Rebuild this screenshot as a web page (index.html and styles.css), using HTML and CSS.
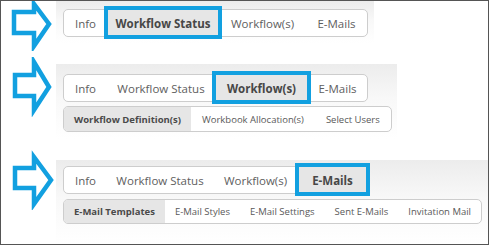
FILE: index.html
```html
<!DOCTYPE html>
<html>
<head>
<meta charset="utf-8">
<link rel="stylesheet" href="styles.css">
</head>
<body>
<div class="frame">
  <div class="row row1">
    <svg class="arrow" width="54" height="50" viewBox="0 0 54 50"><polygon points="13,11 33,11 33,3 48,23 33,45 33,32 13,32"/></svg>
    <div class="shot shot1">
      <div class="tabs">
        <span class="tab t-info">Info</span>
        <span class="tab t-ws active">Workflow Status</span>
        <span class="tab t-wf">Workflow(s)</span>
        <span class="tab t-em">E-Mails</span>
      </div>
    </div>
  </div>
  <div class="row row2">
    <svg class="arrow" width="54" height="60" viewBox="0 0 54 60"><polygon points="14,18 33,18 33,5 48,30 33,53 33,39 14,39"/></svg>
    <div class="shot shot2">
      <div class="tabs">
        <span class="tab t-info">Info</span>
        <span class="tab t-ws">Workflow Status</span>
        <span class="tab t-wf active">Workflow(s)</span>
        <span class="tab t-em">E-Mails</span>
      </div>
      <div class="subtabs">
        <span class="sub sub-active">Workflow Definition(s)</span>
        <span class="sub">Workbook Allocation(s)</span>
        <span class="sub">Select Users</span>
      </div>
    </div>
  </div>
  <div class="row row3">
    <svg class="arrow" width="56" height="62" viewBox="0 0 56 62"><polygon points="14,20 33,20 33,9 50,32 33,56 33,40 14,40"/></svg>
    <div class="shot shot3">
      <div class="tabs">
        <span class="tab t-info">Info</span>
        <span class="tab t-ws">Workflow Status</span>
        <span class="tab t-wf">Workflow(s)</span>
        <span class="tab t-em active">E-Mails</span>
      </div>
      <div class="subtabs">
        <span class="sub sub-active">E-Mail Templates</span>
        <span class="sub">E-Mail Styles</span>
        <span class="sub">E-Mail Settings</span>
        <span class="sub">Sent E-Mails</span>
        <span class="sub">Invitation Mail</span>
      </div>
    </div>
  </div>
</div>
</body>
</html>
```
FILE: styles.css
```css
* { box-sizing: border-box; }
html, body { margin: 0; padding: 0; background: #fff; }
body { font-family: "Open Sans", "Noto Sans", sans-serif; }

.frame {
  width: 489px;
  height: 245px;
  border: 1px solid #555;
  background: #fff;
  display: flex;
  flex-direction: column;
  overflow: hidden;
}

.row { display: flex; align-items: flex-start; }
.row1 { height: 61px; }
.row2 { height: 98px; }
.row3 { flex: 1; }

.arrow { flex: none; display: block; }
.arrow polygon {
  fill: none;
  stroke: #12a0e0;
  stroke-width: 4.5;
  stroke-linejoin: miter;
}

.shot {
  background: linear-gradient(to bottom, #ececec 0%, #f8f8f8 45%, #ffffff 100%);
  padding-left: 7px;
}
.shot1 { width: 318px; height: 42px; padding-top: 8px; margin-left: 1px; }
.shot2 { width: 341px; height: 75px; margin-top: 7px; padding-top: 10px; margin-left: 1px; }
.shot3 { flex: 1; height: 84px; margin-top: 12px; padding-top: 6px; margin-left: -1px; }

.tabs {
  display: flex;
  width: 305px;
  height: 28px;
  border: 1px solid #cdcdcd;
  border-radius: 5px;
  background: #fff;
}
.tab {
  display: flex;
  align-items: center;
  justify-content: center;
  font-size: 11.5px;
  color: #5e5e5e;
  white-space: nowrap;
  position: relative;
}
.t-info { width: 43px; }
.t-ws { width: 112px; }
.t-wf { width: 87px; }
.t-em { width: 61px; }

.row2 .t-ws { width: 108px; }
.row2 .t-wf { width: 93px; }
.row2 .t-em { width: 59px; }

.row3 .t-ws { width: 106px; }
.row3 .t-wf { width: 85px; }
.row3 .t-em { width: 69px; }

.tab.active {
  background: #e6e6e6;
  font-weight: 700;
  color: #474747;
}
.tab.active::after {
  content: "";
  position: absolute;
  top: -4px;
  bottom: -3px;
  left: -3px;
  right: -3px;
  border: 4px solid #12a0e0;
}

.subtabs {
  display: inline-flex;
  height: 26px;
  margin-top: 4px;
  border: 1px solid #cdcdcd;
  border-radius: 5px;
  background: #fff;
  overflow: hidden;
}
.shot3 .subtabs { margin-top: 5px; height: 25px; }
.sub {
  display: flex;
  align-items: center;
  padding: 0 10px;
  font-size: 9.5px;
  color: #595959;
  white-space: nowrap;
}
.shot2 .sub { padding: 0 11px; }
.shot2 .sub-active { padding: 0 10px; }
.sub-active {
  padding: 0 10px;
  background: #e6e6e6;
  font-weight: 700;
  color: #4a4a4a;
}
```
